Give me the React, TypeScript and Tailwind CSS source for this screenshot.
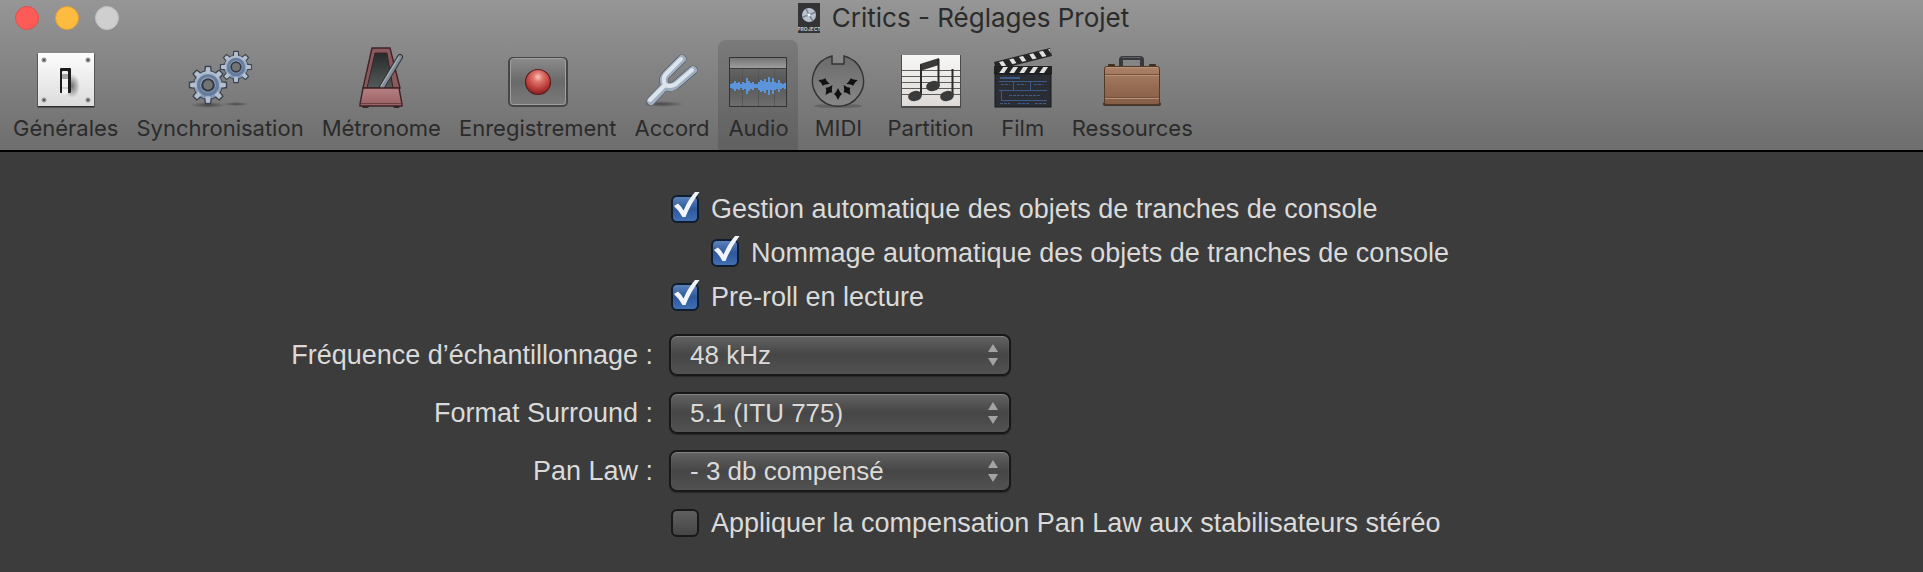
import React, { useState } from "react";

type ToolbarItem = {
	id: string;
	label: string;
	icon: React.ReactNode;
};

const GeneralIcon = () => (
	<svg width="58" height="60" viewBox="0 0 58 60" aria-hidden="true">
		<defs>
			<linearGradient id="plate" x1="0" y1="0" x2="0" y2="1">
				<stop offset="0" stopColor="#fdfdfd" />
				<stop offset="1" stopColor="#dcdcdc" />
			</linearGradient>
			<radialGradient id="plateShade">
				<stop offset="0" stopColor="#555" stopOpacity="0.8" />
				<stop offset="1" stopColor="#555" stopOpacity="0" />
			</radialGradient>
		</defs>
		<rect x="0.5" y="5.5" width="57" height="54" fill="#2e2e2e" />
		<rect x="1" y="5" width="56" height="53" fill="url(#plate)" />
		<ellipse cx="35" cy="38" rx="8" ry="12" fill="url(#plateShade)" />
		{[
			[7, 12],
			[51, 12],
			[7, 52],
			[51, 52],
		].map(([x, y]) => (
			<g key={`${x}-${y}`}>
				<circle cx={x} cy={y} r="2.5" fill="#9b9b9b" />
				<circle cx={x} cy={y} r="1.2" fill="#555" />
			</g>
		))}
		<rect x="23" y="20" width="11" height="25" rx="1" fill="#1c1c1c" />
		<rect x="25" y="23" width="6" height="23" rx="1" fill="#f2f2f2" />
		<rect x="25" y="26" width="6" height="5" fill="#a5a5a5" />
		<path d="M25 40h6" stroke="#b5b5b5" strokeWidth="1" />
	</svg>
);

const Gear = ({ x, y, r }: { x: number; y: number; r: number }) => (
	<g transform={`translate(${x} ${y}) scale(${r / 18})`}>
		{[0, 45, 90, 135, 180, 225, 270, 315].map((angle) => (
			<path
				key={angle}
				d="M-3.2 -12L-2.4 -17.5H2.4L3.2 -12Z"
				transform={`rotate(${angle})`}
				fill="#aebccd"
				stroke="#3b424c"
				strokeWidth="1.4"
			/>
		))}
		<circle r="13.5" fill="url(#gear)" stroke="#444c58" strokeWidth="1" />
		{[0, 45, 90, 135, 180, 225, 270, 315].map((angle) => (
			<path
				key={angle}
				d="M-2.4 -11L-1.9 -16.5H1.9L2.4 -11Z"
				transform={`rotate(${angle})`}
				fill="#b3c0d0"
			/>
		))}
		<circle r="8.8" fill="none" stroke="#667b9c" strokeWidth="3" />
		<circle r="5.5" fill="#747474" stroke="#343b47" strokeWidth="2" />
	</g>
);

const SyncIcon = () => (
	<svg width="64" height="60" viewBox="0 0 64 60" aria-hidden="true">
		<defs>
			<linearGradient id="gear" x1="0" y1="0" x2="0" y2="1">
				<stop offset="0" stopColor="#afbdce" />
				<stop offset="1" stopColor="#7b92b4" />
			</linearGradient>
			<radialGradient id="gearShadow">
				<stop offset="0" stopColor="#333" stopOpacity="0.7" />
				<stop offset="1" stopColor="#333" stopOpacity="0" />
			</radialGradient>
		</defs>
		<ellipse cx="20" cy="57" rx="18" ry="3" fill="url(#gearShadow)" />
		<ellipse cx="48" cy="56" rx="13" ry="2" fill="url(#gearShadow)" />
		<Gear x={48} y={19} r={16} />
		<Gear x={20} y={37} r={19} />
	</svg>
);

const MetronomeIcon = () => (
	<svg width="46" height="64" viewBox="0 0 46 64" aria-hidden="true">
		<defs>
			<linearGradient id="wood" x1="0" y1="0" x2="0" y2="1">
				<stop offset="0" stopColor="#b57f82" />
				<stop offset="1" stopColor="#9a6163" />
			</linearGradient>
			<linearGradient id="metroHole" x1="0" y1="0" x2="0" y2="1">
				<stop offset="0" stopColor="#272b2b" />
				<stop offset="1" stopColor="#545a59" />
			</linearGradient>
		</defs>
		<rect x="4" y="60" width="7" height="4" rx="2" fill="#352426" />
		<rect x="35" y="60" width="7" height="4" rx="2" fill="#352426" />
		<path d="M14 4H32L42 44H5Z" fill="#8a595c" stroke="#3d2326" strokeWidth="1.4" />
		<path d="M17 9H29L35 44H9Z" fill="url(#metroHole)" stroke="#3d2326" />
		<path d="M42 13L24 43" stroke="#2e3339" strokeWidth="6" strokeLinecap="round" />
		<path d="M42 13L24 43" stroke="#858d97" strokeWidth="4" strokeLinecap="round" />
		<path d="M41 13L23 42" stroke="#b3bac2" strokeWidth="1" />
		<path d="M5 44H41L44 60V62H2V60Z" fill="url(#wood)" stroke="#3d2326" strokeWidth="1.4" />
		<path d="M3 59.5H43" stroke="#6b4042" />
	</svg>
);

const RecordIcon = () => (
	<svg width="60" height="52" viewBox="0 0 60 52" aria-hidden="true">
		<defs>
			<linearGradient id="recPlate" x1="0" y1="0" x2="0" y2="1">
				<stop offset="0" stopColor="#8b8b8b" />
				<stop offset="0.5" stopColor="#6a6a6a" />
				<stop offset="1" stopColor="#7b7b7b" />
			</linearGradient>
			<radialGradient id="ball" cx="0.5" cy="0.3" r="0.65">
				<stop offset="0" stopColor="#fbc4b8" />
				<stop offset="0.3" stopColor="#de756d" />
				<stop offset="0.75" stopColor="#b83b3a" />
				<stop offset="1" stopColor="#8f2424" />
			</radialGradient>
		</defs>
		<rect x="1" y="2" width="58" height="48" rx="4" fill="url(#recPlate)" stroke="#474747" strokeWidth="2" />
		<rect x="2.5" y="2.5" width="55" height="46" rx="3" fill="none" stroke="#a0a0a0" />
		<circle cx="30" cy="26" r="12.5" fill="url(#ball)" stroke="#5a1d1d" strokeWidth="1.2" />
	</svg>
);

const TuningIcon = () => (
	<svg width="54" height="56" viewBox="0 0 54 56" aria-hidden="true">
		<defs>
			<radialGradient id="forkShadow">
				<stop offset="0" stopColor="#333" stopOpacity="0.7" />
				<stop offset="1" stopColor="#333" stopOpacity="0" />
			</radialGradient>
		</defs>
		<ellipse cx="17" cy="52" rx="22" ry="3" fill="url(#forkShadow)" />
		<g fill="none" strokeLinecap="round" strokeLinejoin="round">
			<path d="M37 7L22 22C18 26 18 28 20 33M48 18L33 31C29 35 26 36 20 34M20 34L6 49" stroke="#4a525c" strokeWidth="9" />
			<path d="M37 7L22 22C18 26 18 28 20 33M48 18L33 31C29 35 26 36 20 34M20 34L6 49" stroke="#9fafc1" strokeWidth="8" />
			<path d="M36 7L21 22C18 25 18 28 20 33M47 18L32 31C29 34 26 35 20 33M19 34L5 48" stroke="#dce4ec" strokeWidth="4" />
		</g>
	</svg>
);

// half heights of the wave, one for each 2px column
const wave = [2, 3, 5, 3, 4, 2, 4, 3, 8, 5, 3, 4, 2, 2, 4, 6, 5, 7, 4, 9, 4, 8, 4, 3, 6, 3, 2, 3];

const AudioIcon = () => (
	<svg width="58" height="52" viewBox="0 0 58 52" aria-hidden="true">
		<defs>
			<linearGradient id="regionTop" x1="0" y1="0" x2="0" y2="1">
				<stop offset="0" stopColor="#757575" />
				<stop offset="1" stopColor="#9d9d9d" />
			</linearGradient>
			<linearGradient id="regionBody" x1="0" y1="0" x2="0" y2="1">
				<stop offset="0" stopColor="#707070" />
				<stop offset="0.5" stopColor="#565656" />
				<stop offset="1" stopColor="#6e6e6e" />
			</linearGradient>
		</defs>
		<rect x="0.5" y="1.5" width="57" height="49" fill="url(#regionBody)" stroke="#333" />
		<rect x="1" y="2" width="56" height="10" fill="url(#regionTop)" />
		<path d="M1 12.5H57" stroke="#3d3d3d" />
		<path d="M13.5 13V50M29.5 13V50M45.5 13V50" stroke="#555" />
		<path d="M2 30H56" stroke="#5b94da" strokeWidth="2" />
		{wave.map((h, i) => (
			<path key={i} d={`M${i * 2 + 2} ${30 - h}V${30 + h}`} stroke="#5b94da" strokeWidth="2" />
		))}
	</svg>
);

const MidiIcon = () => (
	<svg width="54" height="54" viewBox="0 0 54 54" aria-hidden="true">
		<defs>
			<linearGradient id="din" x1="0" y1="0" x2="0" y2="1">
				<stop offset="0" stopColor="#6b6b6b" />
				<stop offset="1" stopColor="#888" />
			</linearGradient>
		</defs>
		<ellipse cx="27" cy="52" rx="24" ry="2" fill="#4b4b4b" opacity="0.5" />
		<path d="M21 2A25.5 25.5 0 1 0 33 2V10H21Z" fill="url(#din)" stroke="#333" strokeWidth="1.4" />
		{[
			[13, 28, -70],
			[18, 36, -145],
			[27, 40, 0],
			[36, 36, 145],
			[41, 28, 70],
		].map(([x, y, angle]) => (
			<path
				key={x}
				d="M0 -6L2 -2L4 0L2 2L0 6L-2 2L-4 0L-2 -2Z"
				transform={`translate(${x} ${y}) rotate(${angle})`}
				fill="#111"
			/>
		))}
	</svg>
);

const ScoreIcon = () => (
	<svg width="60" height="54" viewBox="0 0 60 54" aria-hidden="true">
		<defs>
			<linearGradient id="paper" x1="0" y1="0" x2="0" y2="1">
				<stop offset="0" stopColor="#f7f7f5" />
				<stop offset="1" stopColor="#dedad7" />
			</linearGradient>
		</defs>
		<rect x="0" y="1" width="60" height="53" fill="#4a4a4a" />
		<rect x="1" y="1" width="58" height="51" fill="url(#paper)" />
		<path d="M1 16.5H59M1 22.5H59M1 28.5H59M1 34.5H59M1 40.5H59" stroke="#5c5c5c" />
		<path d="M19 10L38 4V11L19 17Z" fill="#3a3a3a" />
		<path d="M20 11V41M37.5 5V32M51.5 15V41" stroke="#2a2a2a" strokeWidth="2" />
		<ellipse cx="14" cy="42" rx="7" ry="5" fill="#3a3a3a" transform="rotate(-15 14 42)" />
		<ellipse cx="32" cy="32" rx="7" ry="5" fill="#3a3a3a" transform="rotate(-15 32 32)" />
		<ellipse cx="46" cy="42" rx="7" ry="5" fill="#3a3a3a" transform="rotate(-15 46 42)" />
	</svg>
);

const FilmIcon = () => (
	<svg width="60" height="62" viewBox="0 0 60 62" aria-hidden="true">
		<defs>
			<clipPath id="clapTop">
				<path d="M2 17L57 3L58 9L3 22Z" />
			</clipPath>
			<clipPath id="clapBottom">
				<rect x="2" y="21" width="56" height="6" />
			</clipPath>
		</defs>
		<path d="M1 16L57 2L59 10L3 24Z" fill="#262626" />
		<g clipPath="url(#clapTop)" stroke="#e2e2e2" strokeWidth="4">
			<path d="M5 11L15 26M15 8L25 23M25 6L35 21M35 3L45 18M45 1L55 16M54 -2L64 13" />
		</g>
		<rect x="1" y="20" width="58" height="8" fill="#222" />
		<g clipPath="url(#clapBottom)" stroke="#e2e2e2" strokeWidth="4">
			<path d="M6 31L16 16M16 31L26 16M26 31L36 16M36 31L46 16M46 31L56 16" />
		</g>
		<rect x="2" y="28" width="56" height="33" fill="#2a2e34" stroke="#17191c" />
		<g fill="none" stroke="#3d5a88">
			<path d="M7 32H27" strokeWidth="2" />
			<path d="M6 35.5H54M20.5 36V44M37.5 36V44M6 44.5H54M8.500 45V54M8 54.5H54" />
			<path d="M8 38.5H17M24 38.5H33M41 38.5H50M16 49.5H48M7 57.5H17M25 57.5H37M42 57.5H53" strokeDasharray="3 1" />
		</g>
	</svg>
);

const ResourcesIcon = () => (
	<svg width="58" height="53" viewBox="0 0 58 53" aria-hidden="true">
		<defs>
			<linearGradient id="leather" x1="0" y1="0" x2="0" y2="1">
				<stop offset="0" stopColor="#ab8268" />
				<stop offset="0.5" stopColor="#976d53" />
				<stop offset="1" stopColor="#845d46" />
			</linearGradient>
		</defs>
		<rect x="0" y="47" width="58" height="4" rx="2" fill="#453225" />
		<path d="M18 11V5Q18 3 20 3H37Q39 3 39 5V11" fill="none" stroke="#37393d" strokeWidth="4" />
		<path d="M19 2.5H38" stroke="#5b5e63" strokeWidth="1" />
		<rect x="5" y="9" width="7" height="3" rx="1" fill="#40301f" />
		<rect x="46" y="9" width="7" height="3" rx="1" fill="#40301f" />
		<rect x="1.5" y="11.5" width="55" height="38" rx="2" fill="url(#leather)" stroke="#513a2a" />
		<path d="M2 19.5H56M2 42.5H56" stroke="#73513b" />
		<path d="M2 20.5H56M2 43.5H56M3 12.5H55" stroke="#b8937a" />
	</svg>
);

const items: ToolbarItem[] = [
	{ id: "general", label: "Générales", icon: <GeneralIcon /> },
	{ id: "sync", label: "Synchronisation", icon: <SyncIcon /> },
	{ id: "metronome", label: "Métronome", icon: <MetronomeIcon /> },
	{ id: "record", label: "Enregistrement", icon: <RecordIcon /> },
	{ id: "tuning", label: "Accord", icon: <TuningIcon /> },
	{ id: "audio", label: "Audio", icon: <AudioIcon /> },
	{ id: "midi", label: "MIDI", icon: <MidiIcon /> },
	{ id: "score", label: "Partition", icon: <ScoreIcon /> },
	{ id: "film", label: "Film", icon: <FilmIcon /> },
	{ id: "resources", label: "Ressources", icon: <ResourcesIcon /> },
];

const ProjectIcon = () => (
	<svg width="22" height="30" viewBox="0 0 22 30" aria-hidden="true">
		<rect width="22" height="30" fill="#343437" />
		<circle cx="11" cy="12" r="7" fill="#b9c3cf" />
		<path d="M11 12L8 5.5M11 12L17.5 9M11 12L15 18M11 12L4.5 14" stroke="#7b8592" strokeWidth="1.5" />
		<circle cx="11" cy="12" r="1.5" fill="#eef2f6" />
		<text x="11" y="28" fontSize="5" fontWeight="700" textAnchor="middle" fill="#c9c9c9">
			PROJECT
		</text>
	</svg>
);

function Checkbox({ label, defaultChecked }: { label: string; defaultChecked?: boolean }) {
	return (
		<label className="flex h-11 w-fit items-center gap-3 whitespace-nowrap">
			<span className="relative flex size-7 shrink-0 items-center justify-center">
				<input
					type="checkbox"
					defaultChecked={defaultChecked}
					className="peer size-7 appearance-none rounded-md border-2 border-[#191919] bg-linear-to-b from-[#5f5f5f] to-[#464646] checked:border-[#101c30] checked:from-[#5c82bb] checked:via-[#2f5799] checked:to-[#4270b4]"
				/>
				<svg
					className="pointer-events-none absolute -top-1 left-0 hidden peer-checked:block"
					width="30"
					height="30"
					viewBox="0 0 30 30"
					aria-hidden="true"
				>
					<path d="M3 15L7 12.500Q10.500 15.500 12.500 19.500Q17 9 24 1H28.500Q19.500 13 14.500 26H11.500Q8 19.500 3 15Z" fill="#f0f5fd" />
				</svg>
			</span>
			{label}
		</label>
	);
}

function SelectRow({ id, label, options }: { id: string; label: string; options: string[] }) {
	return (
		<>
			<label htmlFor={id} className="justify-self-end whitespace-nowrap">
				{label}
			</label>
			<div className="relative w-[342px]">
				<select
					id={id}
					className="h-[42px] w-full appearance-none rounded-lg border-2 border-[#181818] bg-linear-to-b from-[#626262] via-[#464646] to-[#525252] pl-[19px] text-[26px] shadow-[inset_0_1px_1px_#858585,0_1px_1px_#2a2a2a]"
				>
					{options.map((option) => (
						<option key={option}>{option}</option>
					))}
				</select>
				<svg
					className="pointer-events-none absolute top-[9px] right-3"
					width="12"
					height="24"
					viewBox="0 0 12 24"
					fill="#a3a3a3"
					aria-hidden="true"
				>
					<path d="M6 1L11 9H1ZM6 23L11 15H1Z" />
				</svg>
			</div>
		</>
	);
}

function App() {
	const [active, setActive] = useState("audio");

	return (
		<div className="flex min-h-screen flex-col bg-[#3c3c3c] font-['Liberation_Sans',Arial,sans-serif] text-[27px] text-[#dadada]">
			<header className="border-b-2 border-black bg-linear-to-b from-[#969696] to-[#6e6e6e] font-[Inter,sans-serif] text-[#2b2b2b]">
				<div className="grid h-10 grid-cols-[1fr_auto_1fr] items-center">
					<div className="flex gap-4 pb-1 pl-[15px]">
						<button aria-label="Fermer" className="size-6 rounded-full border border-[#e2504d] bg-[#fc5b57]" />
						<button aria-label="Réduire" className="size-6 rounded-full border border-[#e0a033] bg-[#fdbc40]" />
						<button aria-label="Agrandir" className="size-6 rounded-full border border-[#c0c0c0] bg-[#cfcfcf]" />
					</div>
					<h1 className="flex items-center gap-3 pb-1 pl-1 text-[26px] leading-8">
						<ProjectIcon />
						Critics - Réglages Projet
					</h1>
				</div>
				<nav className="flex h-[110px] pl-1 text-[22px]">
					{items.map((item) => (
						<button
							key={item.id}
							onClick={() => setActive(item.id)}
							aria-pressed={active === item.id}
							className="flex min-w-20 flex-col items-center justify-end gap-1.5 rounded-t-lg px-[9px] pb-2 aria-pressed:bg-black/12"
						>
							{item.icon}
							<span className="leading-7">{item.label}</span>
						</button>
					))}
				</nav>
			</header>

			<main className="flex flex-col pt-[35px]">
				<div className="ml-[671px] flex flex-col">
					<Checkbox label="Gestion automatique des objets de tranches de console" defaultChecked />
					<div className="pl-10">
						<Checkbox label="Nommage automatique des objets de tranches de console" defaultChecked />
					</div>
					<Checkbox label="Pre-roll en lecture" defaultChecked />
				</div>
				<div className="mt-[15px] grid grid-cols-[653px_1fr] items-center gap-4">
					<SelectRow id="rate" label="Fréquence d’échantillonnage :" options={["48 kHz", "44,1 kHz", "96 kHz"]} />
					<SelectRow id="surround" label="Format Surround :" options={["5.1 (ITU 775)", "Quadraphonic", "7.1"]} />
					<SelectRow id="panlaw" label="Pan Law :" options={["- 3 db compensé", "0 db", "- 3 db"]} />
				</div>
				<div className="mt-[9px] ml-[671px]">
					<Checkbox label="Appliquer la compensation Pan Law aux stabilisateurs stéréo" />
				</div>
			</main>
		</div>
	);
}

export default App;
